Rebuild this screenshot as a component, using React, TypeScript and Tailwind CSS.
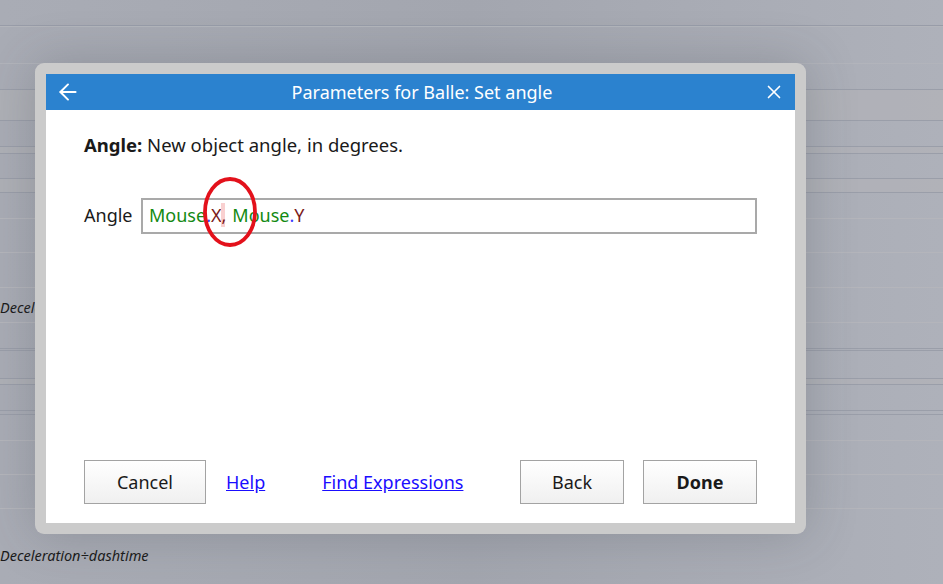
import { ArrowLeft, X } from 'lucide-react'

const font = { fontFamily: '"Noto Sans", "Open Sans", sans-serif' }

function Background() {
  return (
    <div className="flex h-[584px] flex-col bg-gradient-to-r from-[#a9acb5] via-[#a3a6af] to-[#aeb1ba]">
      <div className="h-[26px] shrink-0 border-b border-[#989ca8]" />
      <div className="h-[38px] shrink-0 border-t border-[#b3b5bb] border-b border-b-[#b2b4bb]" />
      <div className="h-[26px] shrink-0 border-b border-[#9a9ea9]" />
      <div className="h-[31px] shrink-0 border-b border-[#9a9ea9] bg-[#b2b3b8]/60" />
      <div className="h-[26px] shrink-0 border-b border-[#9a9ea9]" />
      <div className="h-[7px] shrink-0 border-b border-[#9a9ea9] bg-[#b2b3b8]/60" />
      <div className="h-[25px] shrink-0 border-b border-[#9a9ea9]" />
      <div className="h-[14px] shrink-0 border-b border-[#9a9ea9] bg-[#b2b3b8]/60" />
      <div className="h-[26px] shrink-0 border-b border-[#b4b5bb]" />
      <div className="h-[34px] shrink-0 border-b border-[#b4b5bb]" />
      <div className="h-[35px] shrink-0 border-b border-[#b4b5bb]" />
      <div className="flex h-[35px] shrink-0 items-center pt-[5px] border-b border-[#b4b5bb] text-[14.5px] italic text-[#1b1b1b]">
        Deceleration÷dashtime
      </div>
      <div className="h-[26px] shrink-0 border-b border-[#9a9ea9]" />
      <div className="h-[2px] shrink-0 border-b border-[#9a9ea9]" />
      <div className="h-[28px] shrink-0 border-b border-[#9a9ea9]" />
      <div className="h-[6px] shrink-0 border-b border-[#9a9ea9] bg-[#b2b3b8]/60" />
      <div className="h-[26px] shrink-0 border-b border-[#9a9ea9]" />
      <div className="h-[4px] shrink-0 border-b border-[#9a9ea9]" />
      <div className="h-[26px] shrink-0 border-b border-[#b4b5bb]" />
      <div className="h-[34px] shrink-0 border-b border-[#b4b5bb]" />
      <div className="h-[34px] shrink-0 border-b border-[#b4b5bb]" />
      <div className="flex h-[76px] shrink-0 items-center pt-[18px] text-[14.5px] italic text-[#1b1b1b]">
        Deceleration÷dashtime
      </div>
    </div>
  )
}

function Button({ label, bold, width }: { label: string; bold?: boolean; width: string }) {
  return (
    <button
      className={`${width} h-[44px] border border-[#a3a3a3] bg-gradient-to-b from-white to-[#f0f0f0] text-[18px] text-[#1a1a1a] ${bold ? 'font-bold' : ''}`}
    >
      {label}
    </button>
  )
}

function Dialog() {
  return (
    <div className="absolute left-[35px] top-[63px] rounded-[9px] bg-[#cbcbcb] p-[11px] shadow-[0_0_50px_rgba(60,62,70,0.25)]">
      <div className="flex h-[449px] w-[749px] flex-col bg-white">
        <div className="flex h-[36px] items-center bg-[#2b82cf] pl-[9px] pr-[10px] text-white">
          <ArrowLeft size={26} strokeWidth={1.8} />
          <div className="flex-1 text-center text-[18px]">Parameters for Balle: Set angle</div>
          <X size={22} strokeWidth={1.8} />
        </div>
        <div className="flex flex-1 flex-col px-[38px]">
          <p className="mt-[21px] text-[18.5px] text-[#1a1a1a]">
            <span className="font-bold">Angle:</span> New object angle, in degrees.
          </p>
          <div className="mt-[39px] flex items-center">
            <span className="w-[57px] text-[18px] text-[#1a1a1a]">Angle</span>
            <div className="relative flex h-[36px] flex-1 items-center border-2 border-[#a9a9a9] px-[6px] text-[18px]">
              <span className="text-[#138a13]">Mouse</span>
              <span className="text-[#3b3bff]">.</span>
              <span className="text-[#7a1a1a]">X</span>
              <span className="relative text-[#7a1a1a]">
                <span className="absolute -left-[1px] top-[1px] h-[24px] w-[4px] bg-[#f9d0d0]" />
                <span className="relative">,</span>
              </span>
              <span className="ml-[6px] text-[#138a13]">Mouse</span>
              <span className="text-[#3b3bff]">.</span>
              <span className="text-[#7a1a1a]">Y</span>
              <svg className="absolute left-[58px] top-[-24px]" width="60" height="72" viewBox="0 0 60 72">
                <ellipse cx="29" cy="36" rx="25" ry="33" fill="none" stroke="#e3111b" strokeWidth="3.8" />
              </svg>
            </div>
          </div>
          <div className="mt-auto mb-[19px] flex items-center">
            <Button label="Cancel" width="w-[122px]" />
            <a className="ml-[20px] text-[18px] text-[#1a0dff] underline">Help</a>
            <a className="ml-[57px] text-[18px] text-[#1a0dff] underline">Find Expressions</a>
            <div className="flex-1" />
            <Button label="Back" width="w-[104px]" />
            <div className="w-[19px]" />
            <Button label="Done" bold width="w-[114px]" />
          </div>
        </div>
      </div>
    </div>
  )
}

export default function App() {
  return (
    <div className="relative h-[584px] w-[943px] overflow-hidden" style={font}>
      <Background />
      <Dialog />
    </div>
  )
}
